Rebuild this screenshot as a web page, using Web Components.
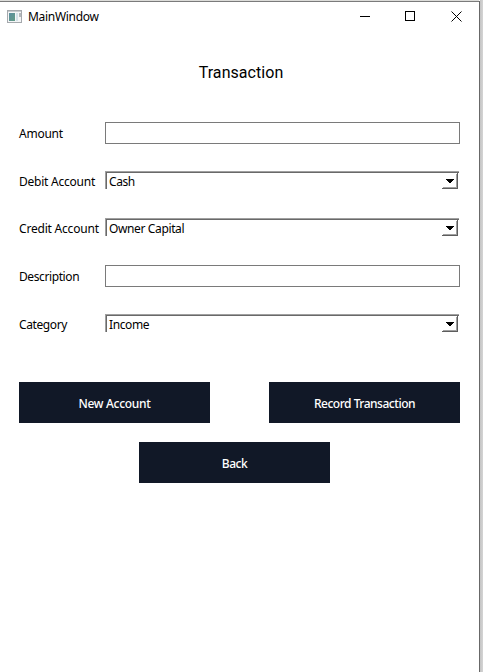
<!DOCTYPE html>
<html lang="en"><head><meta charset="utf-8"><title>MainWindow</title>
<style>html,body{margin:0;height:100%;overflow:hidden;background:#fff}</style></head>
<body>
<main-window heading="MainWindow">
  <transaction-form></transaction-form>
</main-window>
<script>
const define = (name, html, setup) => customElements.define(name, class extends HTMLElement {
  constructor() {
    super();
    const t = document.createElement('template');
    t.innerHTML = html;
    this.attachShadow({ mode: 'open' }).append(t.content.cloneNode(true));
  }
  connectedCallback() { if (setup) setup(this, this.shadowRoot); }
});

define('fit-text', `<style>:host{display:inline-block;white-space:nowrap;letter-spacing:var(--ls,-.3px)}</style><slot></slot>`,
  el => { if (el.hasAttribute('ls')) el.style.setProperty('--ls', el.getAttribute('ls') + 'px'); });

define('title-bar', `<style>
:host{display:flex;height:29px;align-items:center;padding-left:7px;font-size:12px;color:#000}
.app{margin-right:6px;flex:none}
span{flex:1}
.ctl{width:46px;height:29px;flex:none}
</style>
<svg class="app" width="15" height="13" viewBox="0 0 15 13"><defs><linearGradient id="g" x2="1" y2="1"><stop stop-color="#5c8fa0"/><stop offset="1" stop-color="#629b85"/></linearGradient></defs>
<rect x=".5" y=".5" width="14" height="12" fill="#f4f5f6" stroke="#a5a9ad"/><path d="M1 1.5h13" stroke="#c6cacd"/><rect x="2" y="3" width="6" height="8" fill="url(#g)"/><rect x="9" y="3" width="2" height="8" fill="#d3e1e8"/><rect x="12" y="3" width="2" height="4" fill="#b3b8bc"/></svg>
<span><slot></slot></span>
<svg class="ctl" viewBox="0 0 46 29" shape-rendering="crispEdges"><path d="M19 14.5h10" stroke="#000"/></svg>
<svg class="ctl" viewBox="0 0 46 29" shape-rendering="crispEdges"><rect x="18.5" y="9.5" width="9" height="9" fill="none" stroke="#000"/></svg>
<svg class="ctl" viewBox="0 0 46 29"><path d="M18.5 9.5l10 10m0-10l-10 10" stroke="#000" stroke-width="1"/></svg>`);

define('main-window', `<style>
:host{display:grid;grid-template-columns:479px 1px 3px;height:672px;font-family:"Noto Sans","Open Sans",sans-serif;font-size:12px;color:#000}
.win{border-top:1px solid #7b7b7b;margin-top:1px;box-shadow:0 -1px #dcdcd9;background:#fff}
.edge{background:#686868;margin-top:1px}
.out{background:linear-gradient(90deg,#c5c5c5,#d4d4d4)}
</style><div class="win"><title-bar><fit-text ls="-.3"></fit-text></title-bar><slot></slot></div><div class="edge"></div><div class="out"></div>`,
  (el, r) => { r.querySelector('fit-text').textContent = el.getAttribute('heading'); });

define('form-row', `<style>
:host{display:grid;grid-template-columns:86px 355px;height:22px;align-items:center}
.label{line-height:22px;padding-top:1px;height:21px}
</style><div class="label"><fit-text></fit-text></div><slot></slot>`,
  (el, r) => { const t = r.querySelector('fit-text'); t.textContent = el.getAttribute('label'); t.style.setProperty('--ls', el.getAttribute('ls') + 'px'); });

define('line-edit', `<style>:host{display:block;box-sizing:border-box;height:22px;border:1px solid #7a7a7a;background:#fff}</style>`);

define('combo-box', `<style>
:host{display:flex;box-sizing:border-box;width:354px;height:18px;margin-bottom:2px;border-top:1px solid #a0a0a0;border-left:1px solid #a0a0a0;box-shadow:inset 1px 1px #696969;justify-content:space-between;padding-left:3px}
.value{line-height:19px}
svg{flex:none;width:17px;height:18px;overflow:visible}
</style><div class="value"><slot></slot></div>
<svg viewBox="0 0 17 18" shape-rendering="crispEdges"><path d="M1 15.5h14M14.5 2v14" stroke="#a0a0a0" fill="none"/><path d="M0 16.5h16M15.5 1v16" stroke="#5d5d5d" fill="none"/><path d="M4 7h8v1h-1v1h-1v1h-1v1h-2v-1h-1v-1h-1v-1h-1z" fill="#000"/></svg>`);

define('push-button', `<style>:host{display:flex;width:191px;height:41px;background:#111827;color:#fff;align-items:center;justify-content:center;font-weight:500}
div{padding:2px 0 0 0}</style><div><slot></slot></div>`);

define('transaction-form', `<style>
:host{display:block;padding:31px 19px 0}
h1{margin:0;font:400 16px/22px Roboto,sans-serif;text-align:center;padding-left:3px;height:22px}
.fields{display:grid;grid-template-rows:48px 47px 48px 48px 22px;align-items:start;margin-top:38px}
.actions{display:flex;justify-content:space-between;width:441px;margin-top:47px}
.back{display:flex;justify-content:center;width:431px;margin-top:19px}
</style>
<h1><fit-text ls="0.05">Transaction</fit-text></h1>
<div class="fields">
<form-row label="Amount" ls="-.25"><line-edit></line-edit></form-row>
<form-row label="Debit Account" ls="-.23"><combo-box><fit-text ls="-.4">Cash</fit-text></combo-box></form-row>
<form-row label="Credit Account" ls="-.2"><combo-box><fit-text ls="-.37">Owner Capital</fit-text></combo-box></form-row>
<form-row label="Description" ls="-.4"><line-edit></line-edit></form-row>
<form-row label="Category" ls="-.4"><combo-box><fit-text ls="-.4">Income</fit-text></combo-box></form-row>
</div>
<div class="actions"><push-button><fit-text>New Account</fit-text></push-button><push-button><fit-text ls="-.48">Record Transaction</fit-text></push-button></div>
<div class="back"><push-button><fit-text ls="-.5">Back</fit-text></push-button></div>`);
</script>
</body></html>
